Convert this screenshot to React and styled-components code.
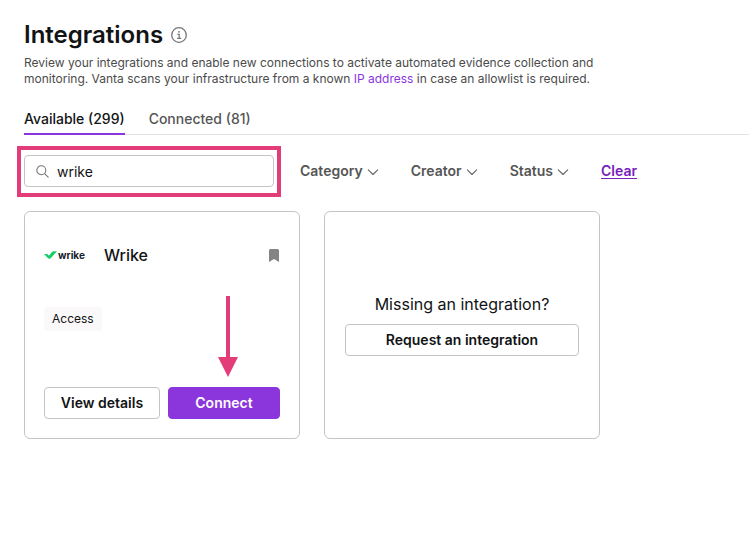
import React, { useState } from "react";
import styled, { createGlobalStyle } from "styled-components";

const GlobalStyle = createGlobalStyle`
  *, *::before, *::after { box-sizing: border-box; }
  body {
    margin: 0;
    background: #fff;
    color: #121314;
    font-family: Inter, "Liberation Sans", sans-serif;
    font-size: 14px;
  }
  button, input { font: inherit; color: inherit; }
`;

const Page = styled.main`
  padding: 19px 0 24px 24px;
`;

const TitleRow = styled.div`
  display: flex;
  align-items: center;
  gap: 8px;
`;

const Title = styled.h1`
  margin: 0;
  font-size: 24px;
  line-height: 32px;
  font-weight: 600;
`;

const InfoButton = styled.button`
  display: flex;
  padding: 0;
  border: 0;
  background: none;
  color: #757575;
`;

const Description = styled.p`
  max-width: 600px;
  margin: 4px 0 0;
  padding-right: 8px;
  font-size: 12px;
  line-height: 16px;
  color: #4b4b4b;
`;

const TextLink = styled.a`
  color: #8b35dd;
  text-decoration: none;
`;

const Tabs = styled.div`
  display: flex;
  gap: 24px;
  margin-top: 16px;
  box-shadow: inset 0 -1px #e2e2e2;
`;

const Tab = styled.button`
  height: 32px;
  padding: 0;
  border: 0;
  border-bottom: 2px solid ${(p) => (p.$active ? "#8b35dd" : "transparent")};
  background: none;
  font-weight: 500;
  color: ${(p) => (p.$active ? "#121314" : "#555")};
`;

const Filters = styled.div`
  display: flex;
  align-items: center;
  margin-top: 20px;
  gap: 26px;
`;

const SearchArea = styled.div`
  position: relative;
  flex: 0 1 250px;
  min-width: 0;
`;

const SearchBox = styled.label`
  display: flex;
  align-items: center;
  gap: 8px;
  height: 32px;
  padding: 0 11px;
  border: 1px solid #c4c4c4;
  border-radius: 4px;
  color: #757575;
`;

const SearchInput = styled.input`
  flex: 1;
  min-width: 0;
  padding: 0;
  border: 0;
  outline: 0;
  background: none;
  color: #121314;
`;

const Highlight = styled.div`
  position: absolute;
  inset: -9px -7px -10px;
  border: 4px solid #e33d79;
  pointer-events: none;
`;

const FilterGroup = styled.div`
  display: flex;
  align-items: center;
  gap: 32px;
`;

const FilterButton = styled.button`
  display: flex;
  align-items: center;
  gap: 4px;
  padding: 0;
  border: 0;
  background: none;
  font-weight: 600;
  line-height: 20px;
  color: #555;
`;

const ClearLink = styled.a`
  font-weight: 600;
  line-height: 20px;
  color: #7820bc;
  text-decoration: underline;
  text-underline-offset: 2px;
`;

const Cards = styled.div`
  display: grid;
  grid-template-columns: repeat(2, minmax(0, 276px));
  gap: 24px;
  margin-top: 24px;
  padding-right: 24px;
`;

const Card = styled.section`
  position: relative;
  display: flex;
  flex-direction: column;
  min-height: 228px;
  padding: 19px;
  border: 1px solid #c4c4c4;
  border-radius: 6px;
`;

const PromptCard = styled(Card)`
  justify-content: center;
  gap: 8px;
  padding: 18px 20px 20px;
`;

const CardHeader = styled.div`
  display: flex;
  align-items: center;
  gap: 20px;
  height: 48px;
`;

const Brand = styled.div`
  display: flex;
  align-items: center;
  gap: 1px;
  width: 40px;
  font-size: 10px;
  line-height: 12px;
  font-weight: 700;
  color: #17212b;

  svg { flex: none; }
`;

const CardTitle = styled.h2`
  flex: 1;
  margin: 0;
  font-size: 16px;
  line-height: 24px;
  font-weight: 500;
`;

const BookmarkButton = styled.button`
  display: flex;
  padding: 0 1px;
  border: 0;
  background: none;
  color: #858383;
`;

const Tag = styled.span`
  align-self: flex-start;
  margin: 28px 0;
  padding: 4px 8px;
  border-radius: 4px;
  background: #faf8f9;
  font-size: 12px;
  line-height: 16px;
`;

const Actions = styled.div`
  display: flex;
  gap: 8px;
  margin-top: auto;
`;

const Button = styled.button`
  flex: ${(p) => p.$grow || "none"};
  height: 32px;
  padding: 0 0 2px;
  border: 1px solid ${(p) => (p.$primary ? "#8b35dd" : "#c4c4c4")};
  border-radius: 4px;
  background: ${(p) => (p.$primary ? "#8b35dd" : "#fff")};
  color: ${(p) => (p.$primary ? "#fff" : "#121314")};
  font-weight: 600;
`;

const Prompt = styled.p`
  margin: 0;
  font-size: 16px;
  line-height: 24px;
  text-align: center;
`;

const Pointer = styled.svg`
  position: absolute;
  right: 61px;
  bottom: 61px;
  pointer-events: none;
`;

const InfoIcon = () => (
  <svg width="16" height="16" viewBox="0 0 16 16" fill="none" stroke="currentColor" aria-hidden="true">
    <circle cx="8" cy="8" r="7.3" strokeWidth="1.3" />
    <path d="M6.4 7.3h1.8v4M6.1 11.4h4" strokeWidth="1.2" />
    <circle cx="8" cy="4.8" r=".9" fill="currentColor" stroke="none" />
  </svg>
);

const SearchIcon = () => (
  <svg width="13" height="13" viewBox="0 0 13 13" fill="none" stroke="currentColor" strokeWidth="1.1" strokeLinecap="round" aria-hidden="true">
    <circle cx="5.3" cy="5.3" r="4.5" />
    <path d="m8.6 8.6 3.6 3.6" />
  </svg>
);

const Chevron = () => (
  <svg width="12" height="12" viewBox="0 0 12 12" fill="none" stroke="#666" strokeWidth="1.1" strokeLinecap="round" strokeLinejoin="round" aria-hidden="true">
    <path d="M1.3 4.8 6 9.5l4.7-4.7" />
  </svg>
);

const BookmarkIcon = () => (
  <svg width="10" height="13" viewBox="0 0 10 13" aria-hidden="true">
    <path d="M1.5 0h7Q10 0 10 1.5V13L5 10 0 13V1.5Q0 0 1.5 0Z" fill="currentColor" />
  </svg>
);

const WrikeMark = () => (
  <svg width="13" height="8" viewBox="0 0 13 8" aria-hidden="true">
    <path d="M7 2.2C8 .8 8.8.2 10.2.2H13L7.8 6.1Q6.6 7.5 5.3 7.9L4.6 5.3Z" fill="#14cf65" />
    <path d="M0 2.9h2.2c1 0 1.5.3 2.1 1l1 1.1v2.9Q4.2 7.5 3.3 6.5Z" fill="#14cf65" />
  </svg>
);

const filters = ["Category", "Creator", "Status"];
const tabs = ["Available (299)", "Connected (81)"];

export default function App() {
  const [query, setQuery] = useState("wrike");
  const [active, setActive] = useState(0);

  return (
    <>
      <GlobalStyle />
      <Page>
        <TitleRow>
          <Title>Integrations</Title>
          <InfoButton aria-label="About integrations"><InfoIcon /></InfoButton>
        </TitleRow>
        <Description>
          Review your integrations and enable new connections to activate automated evidence collection and
          monitoring. Vanta scans your infrastructure from a known <TextLink href="#ip">IP address</TextLink> in
          case an allowlist is required.
        </Description>
        <Tabs role="tablist">
          {tabs.map((label, i) => (
            <Tab key={label} role="tab" aria-selected={active === i} $active={active === i} onClick={() => setActive(i)}>
              {label}
            </Tab>
          ))}
        </Tabs>
        <Filters>
          <SearchArea>
            <SearchBox>
              <SearchIcon />
              <SearchInput type="text" aria-label="Search integrations" value={query} onChange={(e) => setQuery(e.target.value)} />
            </SearchBox>
            <Highlight />
          </SearchArea>
          <FilterGroup>
            {filters.map((name) => (
              <FilterButton key={name} aria-haspopup="menu">{name}<Chevron /></FilterButton>
            ))}
            <ClearLink href="#clear">Clear</ClearLink>
          </FilterGroup>
        </Filters>
        <Cards>
          <Card>
            <CardHeader>
              <Brand><WrikeMark /><span>wrike</span></Brand>
              <CardTitle>Wrike</CardTitle>
              <BookmarkButton aria-label="Bookmark Wrike"><BookmarkIcon /></BookmarkButton>
            </CardHeader>
            <Tag>Access</Tag>
            <Actions>
              <Button $grow="29 1 0">View details</Button>
              <Button $grow="28 1 0" $primary>Connect</Button>
            </Actions>
            <Pointer width="20" height="81" viewBox="0 0 20 81" fill="#e33d79" aria-hidden="true">
              <path d="M8 0h4v61h8L10 81 0 61h8Z" />
            </Pointer>
          </Card>
          <PromptCard>
            <Prompt>Missing an integration?</Prompt>
            <Button>Request an integration</Button>
          </PromptCard>
        </Cards>
      </Page>
    </>
  );
}
